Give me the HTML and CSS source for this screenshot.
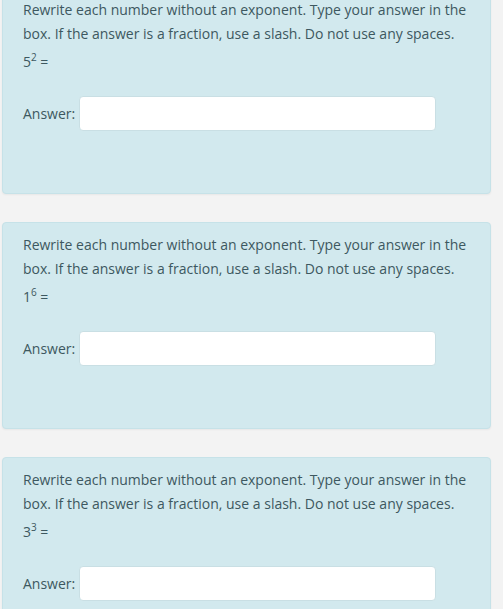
FILE: index.html
```html
<!DOCTYPE html>
<html lang="en">
  <head>
    <meta charset="UTF-8" />
    <meta name="viewport" content="width=device-width, initial-scale=1.0" />
    <title>Exponents Practice</title>
    <link rel="stylesheet" href="styles.css">
  </head>
  <body>
    <div class="topbar"></div>

    <div class="question-list">
      <div class="question">
        <p class="prompt">Rewrite each number without an exponent. Type your answer in the box. If the answer is a fraction, use a slash. Do not use any spaces.</p>
        <p class="equation">5<sup>2</sup> =</p>
        <div class="answer-row">
          <label for="a1">Answer:</label>
          <input type="text" id="a1" />
        </div>
      </div>

      <div class="question">
        <p class="prompt">Rewrite each number without an exponent. Type your answer in the box. If the answer is a fraction, use a slash. Do not use any spaces.</p>
        <p class="equation">1<sup>6</sup> =</p>
        <div class="answer-row">
          <label for="a2">Answer:</label>
          <input type="text" id="a2" />
        </div>
      </div>

      <div class="question">
        <p class="prompt">Rewrite each number without an exponent. Type your answer in the box. If the answer is a fraction, use a slash. Do not use any spaces.</p>
        <p class="equation">3<sup>3</sup> =</p>
        <div class="answer-row">
          <label for="a3">Answer:</label>
          <input type="text" id="a3" />
        </div>
      </div>
    </div>
  </body>
</html>
```

FILE: styles.css
```css
body {
  font-family: "Open Sans", Arial, sans-serif;
  font-size: 14px;
  color: #3d5860;
  background-color: #f3f3f3;
  margin: 0;
  padding: 0;
  overflow: hidden;
}

.topbar {
  height: 0;
  position: relative;
  z-index: 2;
  box-shadow: 0 1px 4px rgba(0, 0, 0, 0.25);
}

.question-list {
  width: 489px;
  margin: -13px 0 0 2px;
}

.question {
  background-color: #d2e9ee;
  border: 1px solid #c6e2e8;
  border-radius: 4px;
  padding: 10px 20px 62px 20px;
  margin-bottom: 28px;
  box-shadow: 0 1px 2px rgba(0, 0, 0, 0.05);
}

.prompt {
  margin: 0;
  line-height: 24px;
}

.equation {
  margin: 4px 0 0 0;
  line-height: 24px;
}

.equation sup {
  font-size: 10px;
  line-height: 0;
}

.answer-row {
  display: flex;
  align-items: center;
  gap: 4px;
  margin-top: 22px;
}

.answer-row input {
  width: 357px;
  height: 35px;
  box-sizing: border-box;
  border: 1px solid #c9dfe4;
  border-radius: 4px;
  background-color: white;
  padding: 6px 10px;
  font-size: 14px;
  font-family: inherit;
}
```
